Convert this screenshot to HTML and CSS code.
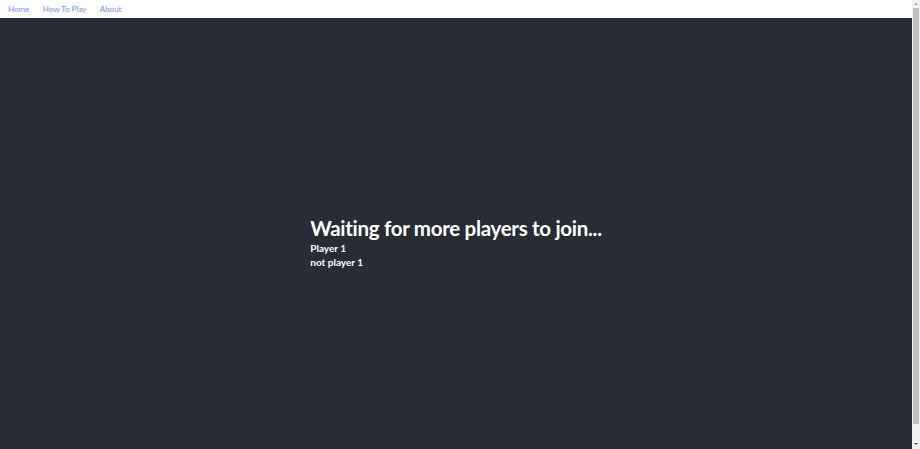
FILE: index.html
```html
<!DOCTYPE html>
<html>
<head>
<meta charset="utf-8">
<link rel="stylesheet" href="styles.css">
</head>
<body>
<nav class="nav">
  <a class="nav-link" href="#">Home</a>
  <a class="nav-link" href="#">How To Play</a>
  <a class="nav-link" href="#">About</a>
</nav>
<main class="app">
  <div class="lobby">
    <h2 class="lobby-title">Waiting for more players to join...</h2>
    <p class="player">Player 1</p>
    <p class="player">not player 1</p>
  </div>
</main>
<div class="scrollbar" aria-hidden="true">
  <div class="sb-arrow sb-up"></div>
  <div class="sb-thumb"></div>
  <div class="sb-arrow sb-down"></div>
</div>
</body>
</html>
```
FILE: styles.css
```css
html, body {
  margin: 0;
  padding: 0;
}
body {
  font-family: Lato, "Noto Sans", sans-serif;
  background: #ffffff;
  margin-right: 8px;
}
.nav {
  height: 18px;
  display: flex;
  align-items: center;
  gap: 13.5px;
  padding: 0 8px;
  background: #ffffff;
}
.nav-link {
  font-size: 8px;
  color: #6a8ff7;
  text-decoration: none;
  line-height: 18px;
}
.app {
  min-height: 100vh;
  background: #282c34;
  display: flex;
  flex-direction: column;
  align-items: center;
  justify-content: center;
  color: #ffffff;
}
.lobby {
  text-align: left;
}
.lobby-title {
  margin: 0 0 2px 0;
  font-size: 20.5px;
  line-height: 22px;
  letter-spacing: -0.3px;
  font-weight: 700;
}
.player {
  margin: 0;
  font-size: 10px;
  line-height: 14px;
  font-weight: 700;
}
.scrollbar {
  position: fixed;
  top: 0;
  right: 0;
  width: 8px;
  height: 100vh;
  background: #f1f1f1;
  display: flex;
  flex-direction: column;
  align-items: center;
}
.sb-arrow {
  width: 0;
  height: 0;
  border-left: 2px solid transparent;
  border-right: 2px solid transparent;
}
.sb-up {
  margin-top: 3px;
  border-bottom: 2px solid #a3a3a3;
}
.sb-down {
  margin-bottom: 4px;
  border-top: 2px solid #505050;
}
.sb-thumb {
  width: 6px;
  flex: 1;
  margin: 3px 0 19px 0;
  background: #c1c1c1;
}
```
